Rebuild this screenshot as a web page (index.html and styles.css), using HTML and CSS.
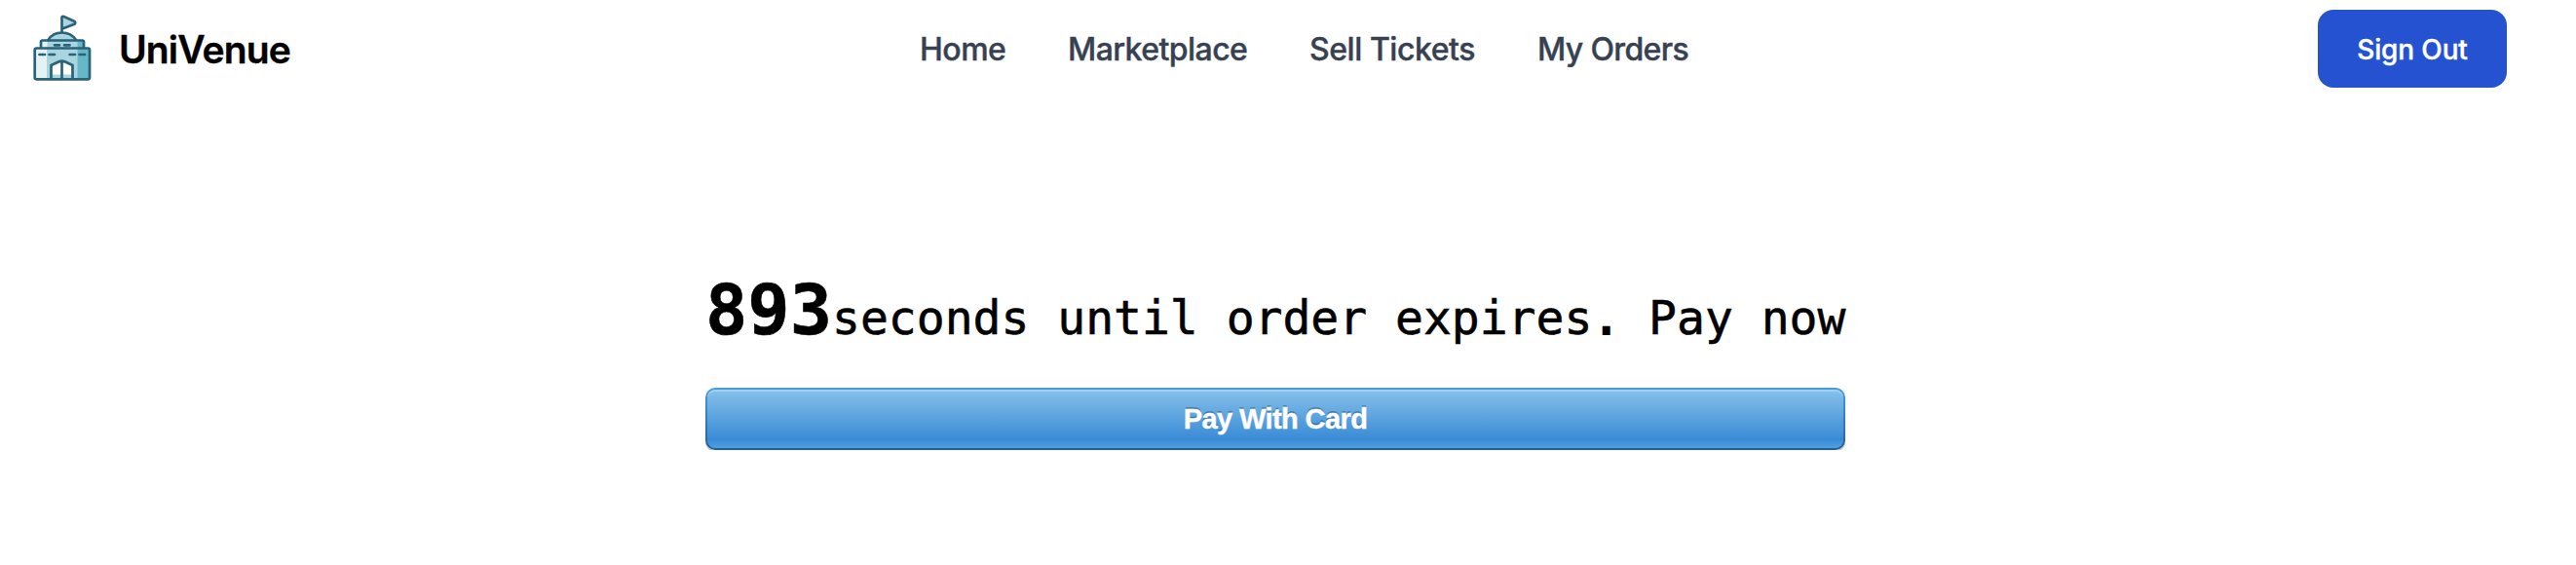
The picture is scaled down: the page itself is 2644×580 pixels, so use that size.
FILE: index.html
```html
<!DOCTYPE html>
<html lang="en">
<head>
<meta charset="utf-8">
<title>UniVenue</title>
<link rel="stylesheet" href="styles.css">
</head>
<body>
<header class="header">
  <a class="brand">
    <svg class="logo" viewBox="20 0 90 100" aria-hidden="true">
      <path fill="#a8d5de" d="M63.5 17.5 77.500 23.5 63.500 29.500zM49 41Q54 34 63.500 34T79 41z"/>
      <path fill="#a8d5de" d="M42 41.500H86V49H42zM35.500 49.500H92V81.500H35.500z"/>
      <path fill="#e4f2f4" d="M42 41.500H48.500V49H42zM35.500 49.500H48V81.500H35.500z"/>
      <path fill="#66b8c8" d="M79.500 41.500H86V49H79.500zM79.500 49.500H92V81.500H79.500z"/>
      <path fill="#fff" d="M52.500 81V67L63.500 62.500 74.500 67V81z"/>
      <path fill="#a8d5de" d="M53 76.500H74.500V81H53z"/>
      <g class="logo-line">
        <path d="M63.500 33V17.500Q64.500 16.500 66 17.200L76.500 22Q78 23.500 76.500 24.800L64 29.500"/>
        <path d="M49.500 41Q54 33.500 63.500 33.500T78 41"/>
        <path d="M42 49V43Q42 41.500 43.500 41.500H84.500Q86 41.500 86 43V49"/>
        <rect x="35.700" y="49.500" width="56.300" height="31.800" rx="1.800"/>
        <path d="M52.500 81V67L60.500 63.200Q63.500 62 66.500 63.200L74.500 67V81M63.500 63V81"/>
        <path d="M56 46.300H61M66 46.300H71.500M40.500 56H46M50.500 56H56M71.500 56H77M81.500 56H87"/>
      </g>
    </svg>
    <span class="brand-name">UniVenue</span>
  </a>
  <nav class="nav">
    <a class="home">Home</a>
    <a class="market">Marketplace</a>
    <a class="sell">Sell Tickets</a>
    <a class="orders">My Orders</a>
  </nav>
  <button class="sign-out">Sign Out</button>
</header>
<main class="checkout">
  <p class="countdown"><strong>893</strong>seconds until order expires<span class="stop">.</span> Pay now</p>
  <button class="pay"><span class="pay-label">Pay With Card</span></button>
</main>
</body>
</html>
```
FILE: styles.css
```css
* { box-sizing: border-box; }
body { margin: 0; background: #fff; color: #000; font-family: Inter, sans-serif; }
button { border: 0; margin: 0; }
.header { display: grid; grid-template-columns: 944px 1fr 265px; height: 100px; align-items: center; }
.brand { display: flex; align-items: center; padding-left: 20px; height: 100px; }
.logo { width: 90px; height: 100px; display: block; }
.logo-line { fill: none; stroke: #2a6279; stroke-width: 2.7; stroke-linecap: round; stroke-linejoin: round; }
.brand-name { margin-left: 12px; padding-top: 1px; font-size: 39px; line-height: 48px; font-weight: 600; letter-spacing: -0.85px; -webkit-text-stroke: 0.4px #000; }
.nav { display: flex; gap: 64px; padding-top: 1px; font-size: 32px; line-height: 48px; font-weight: 500; color: #374151; white-space: nowrap; -webkit-text-stroke: 0.4px #374151; }
.nav a { flex: none; letter-spacing: -0.65px; }
.nav .home { width: 88px; letter-spacing: -0.5px; }
.nav .market { width: 184px; letter-spacing: -0.55px; }
.nav .sell { width: 170px; letter-spacing: -0.45px; }
.orders { width: 160px; }
.sign-out { width: 194px; height: 80px; padding: 1px 0 0; border-radius: 16px; background: #2552d0; color: #fff; font: 500 28px/40px Inter, sans-serif; letter-spacing: -0.15px; -webkit-text-stroke: 0.4px #fff; }
.checkout { width: 1170px; margin: 176px 0 0 724px; }
.countdown { margin: 0; height: 122px; font: 48px/84px "DejaVu Sans Mono", monospace; white-space: nowrap; -webkit-text-stroke: 0.6px #000; }
.countdown strong { font-size: 72px; }
.stop { -webkit-text-stroke-width: 2px; }
.pay { display: block; width: 1170px; height: 64px; padding: 2px; border-radius: 10px; background: linear-gradient(#4a9bdf, #215f96); box-shadow: 0 2px 0 rgba(0,0,0,.2); }
.pay-label { display: block; height: 60px; border-radius: 8px; background: linear-gradient(#86c1e9, #3a8bd6 85%, #4f9fe0); box-shadow: inset 0 2px 0 rgba(255,255,255,.25); color: #fff; font: bold 29px/60px "Liberation Sans", sans-serif; letter-spacing: -0.6px; text-shadow: 0 -2px 0 rgba(0,0,0,.25); -webkit-text-stroke: 0.4px #fff; }
```
